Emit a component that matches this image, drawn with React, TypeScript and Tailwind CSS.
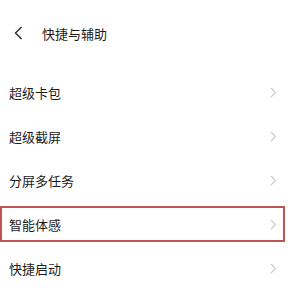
import React from "react";

const items = ["超级卡包", "超级截屏", "分屏多任务", "智能体感", "快捷启动"];

function Chevron() {
  return (
    <svg width="7" height="11" viewBox="0 0 7 11" fill="none">
      <path d="M1 1l4.5 4.5L1 10" stroke="#c9c9c9" strokeWidth="1.1" />
    </svg>
  );
}

export default function App() {
  return (
    <div
      className="w-[302px] h-[298px] bg-white text-[#1c1c1c] overflow-hidden"
      style={{ fontFamily: '"Noto Sans CJK SC", "Noto Sans", sans-serif' }}
    >
      <div className="h-[66px] flex items-center">
        <div className="w-[42px] flex items-center pl-[14px]">
          <svg width="9" height="14" viewBox="0 0 9 14" fill="none">
            <path d="M7.5 1L1.5 7l6 6" stroke="#2a2a2a" strokeWidth="1.4" />
          </svg>
        </div>
        <span className="text-[13px] leading-none">快捷与辅助</span>
      </div>
      <div className="pt-1">
        {items.map((t, i) => (
          <div key={t} className="relative h-[44px] flex items-center pl-[9px] pr-[25px]">
            <span className="flex-1 text-[13px] leading-none">{t}</span>
            <Chevron />
            {i === 3 && (
              <div className="absolute left-0 top-1 bottom-[4px] w-[285px] border-[2.5px] border-[#bd5652]" />
            )}
          </div>
        ))}
      </div>
    </div>
  );
}
